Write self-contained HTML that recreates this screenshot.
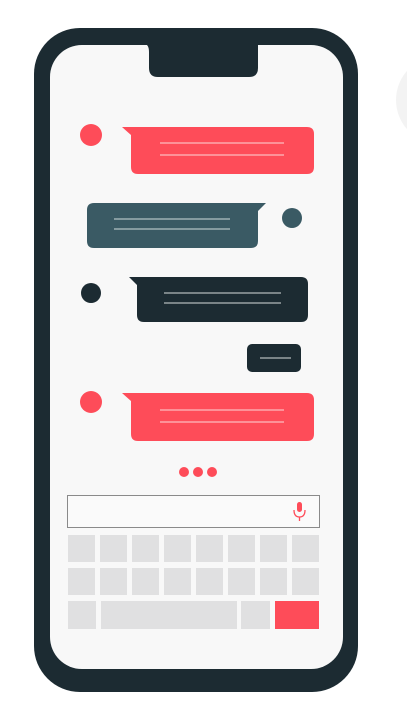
<!DOCTYPE html>
<html><head><style>html,body{margin:0;padding:0;background:#fff;}svg{display:block}</style></head>
<body>
<svg width="407" height="715" viewBox="0 0 407 715" xmlns="http://www.w3.org/2000/svg">
<rect width="407" height="715" fill="#ffffff"/>
<circle cx="440" cy="100" r="44" fill="#f3f3f3"/>
<rect x="34" y="28" width="324" height="664" rx="46" fill="#1c2b32"/>
<rect x="50" y="45" width="293" height="624" rx="32" fill="#f8f8f8"/>
<path d="M144 44 H258 V68 Q258 77 249 77 H158 Q149 77 149 68 V52 Q149 44 144 44Z" fill="#1c2b32"/>
<!-- red1 -->
<circle cx="91" cy="135" r="11" fill="#fe4c59"/>
<path d="M122 127 H307 Q314 127 314 134 V167 Q314 174 307 174 H138 Q131 174 131 167 V135Z" fill="#fe4c59"/>
<g stroke="#fcd6d8" stroke-width="1"><line x1="160" y1="143" x2="284" y2="143"/><line x1="160" y1="155" x2="284" y2="155"/></g>
<!-- teal -->
<circle cx="292" cy="218" r="10" fill="#3a5a64"/>
<path d="M266 203 H94 Q87 203 87 210 V241 Q87 248 94 248 H251 Q258 248 258 241 V211Z" fill="#3a5a64"/>
<g stroke="#d0dcdc" stroke-width="1"><line x1="114" y1="219" x2="230" y2="219"/><line x1="114" y1="229" x2="230" y2="229"/></g>
<!-- dark -->
<circle cx="91" cy="293" r="10" fill="#1c2b32"/>
<path d="M129 277 H301 Q308 277 308 284 V315 Q308 322 301 322 H144 Q137 322 137 315 V285Z" fill="#1c2b32"/>
<g stroke="#d8dcdc" stroke-width="1"><line x1="164" y1="293" x2="281" y2="293"/><line x1="164" y1="303" x2="281" y2="303"/></g>
<rect x="247" y="344" width="54" height="28" rx="5" fill="#1c2b32"/>
<line x1="260" y1="358" x2="291" y2="358" stroke="#d8dcdc" stroke-width="1"/>
<!-- red2 -->
<circle cx="91" cy="402" r="11" fill="#fe4c59"/>
<path d="M122 393 H307 Q314 393 314 400 V434 Q314 441 307 441 H138 Q131 441 131 434 V401Z" fill="#fe4c59"/>
<g stroke="#fcd6d8" stroke-width="1"><line x1="160" y1="410" x2="284" y2="410"/><line x1="160" y1="422" x2="284" y2="422"/></g>
<circle cx="184" cy="472" r="5" fill="#fe4c59"/><circle cx="198" cy="472" r="5" fill="#fe4c59"/><circle cx="212" cy="472" r="5" fill="#fe4c59"/>
<!-- input -->
<rect x="67.5" y="495.5" width="252" height="32" fill="#fafafa" stroke="#8a8a8a" stroke-width="1"/>
<rect x="297" y="502" width="5" height="10" rx="2.5" fill="#fe4c59"/>
<path d="M294 510 Q294 517 299.5 517 Q305 517 305 510" fill="none" stroke="#fe4c59" stroke-width="1.3"/>
<line x1="299.5" y1="517" x2="299.5" y2="521" stroke="#fe4c59" stroke-width="1.3"/>
<g fill="#e0e0e1">
<rect x="68" y="535" width="27" height="27"/><rect x="100" y="535" width="27" height="27"/><rect x="132" y="535" width="27" height="27"/><rect x="164" y="535" width="27" height="27"/><rect x="196" y="535" width="27" height="27"/><rect x="228" y="535" width="27" height="27"/><rect x="260" y="535" width="27" height="27"/><rect x="292" y="535" width="27" height="27"/>
<rect x="68" y="568" width="27" height="27"/><rect x="100" y="568" width="27" height="27"/><rect x="132" y="568" width="27" height="27"/><rect x="164" y="568" width="27" height="27"/><rect x="196" y="568" width="27" height="27"/><rect x="228" y="568" width="27" height="27"/><rect x="260" y="568" width="27" height="27"/><rect x="292" y="568" width="27" height="27"/>
<rect x="68" y="601" width="28" height="28"/><rect x="101" y="601" width="136" height="28"/><rect x="241" y="601" width="29" height="28"/>
</g>
<rect x="275" y="601" width="44" height="28" fill="#fe4c59"/>
</svg>
</body></html>
